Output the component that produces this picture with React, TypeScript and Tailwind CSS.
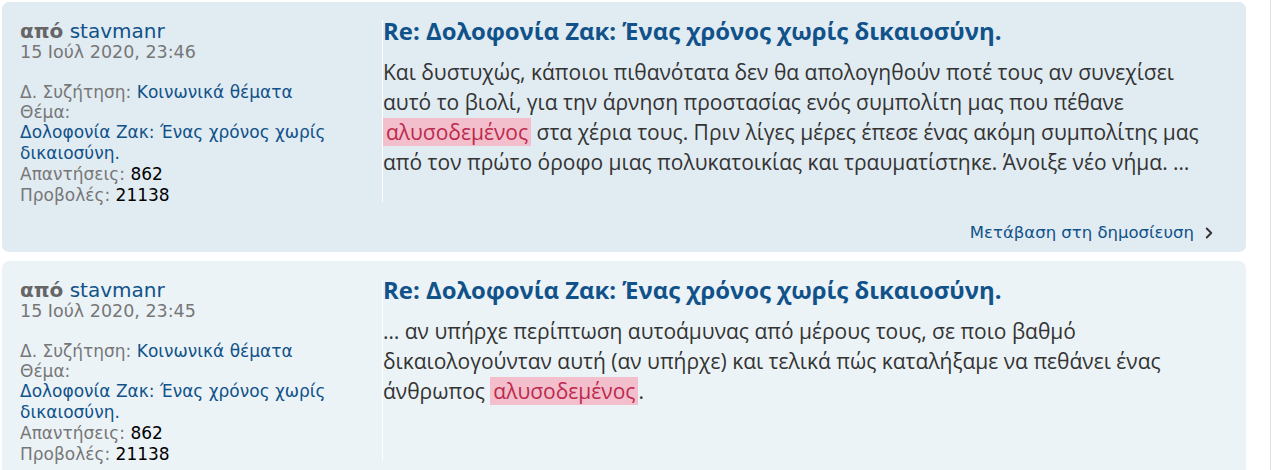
import { ChevronRight } from "lucide-react"

type Post = {
  date: string
  lines: React.ReactNode[]
  bg: string
  link: boolean
}

const hl = (w: string) => (
  <span className="bg-[#f3bfcc] text-[#bc2a4d] px-[3px]">{w}</span>
)

const posts: Post[] = [
  {
    date: "15 Ιούλ 2020, 23:46",
    bg: "bg-[#e1ebf2]",
    link: true,
    lines: [
      "Και δυστυχώς, κάποιοι πιθανότατα δεν θα απολογηθούν ποτέ τους αν συνεχίσει",
      "αυτό το βιολί, για την άρνηση προστασίας ενός συμπολίτη μας που πέθανε",
      <>{hl("αλυσοδεμένος")} στα χέρια τους. Πριν λίγες μέρες έπεσε ένας ακόμη συμπολίτης μας</>,
      "από τον πρώτο όροφο μιας πολυκατοικίας και τραυματίστηκε. Άνοιξε νέο νήμα. …",
    ],
  },
  {
    date: "15 Ιούλ 2020, 23:45",
    bg: "bg-[#ecf3f7]",
    link: false,
    lines: [
      "… αν υπήρχε περίπτωση αυτοάμυνας από μέρους τους, σε ποιο βαθμό",
      "δικαιολογούνταν αυτή (αν υπήρχε) και τελικά πώς καταλήξαμε να πεθάνει ένας",
      <>άνθρωπος {hl("αλυσοδεμένος")}.</>,
    ],
  },
]

function PostRow({ post }: { post: Post }) {
  return (
    <div className={`${post.bg} shrink-0 rounded-[7px] h-[250px] pl-[18px] pr-[31px] pt-[18px] flex flex-col`}>
      <div className="flex">
        <div className="w-[362px] font-['DejaVu_Sans',sans-serif] text-[17px] leading-[20px] text-[#777]">
          <div className="text-[20px] leading-[22px]">
            <span className="font-bold text-[#666]">από</span>{" "}
            <span className="text-[#105289]">stavmanr</span>
          </div>
          <div className="text-[17.5px] text-[#777] mb-[20px]">{post.date}</div>
          <div>
            Δ. Συζήτηση: <span className="text-[#105289]">Κοινωνικά θέματα</span>
          </div>
          <div>Θέμα:</div>
          <div className="text-[#105289] leading-[21px]">Δολοφονία Ζακ: Ένας χρόνος χωρίς δικαιοσύνη.</div>
          <div className="leading-[21px]">
            Απαντήσεις: <span className="text-black">862</span>
          </div>
          <div className="leading-[21px]">
            Προβολές: <span className="text-black">21138</span>
          </div>
        </div>
        <div className="flex-1 h-[182px] border-l border-white font-['Open_Sans',sans-serif]">
          <div className="text-[23.9px] leading-[22px] font-bold text-[#105289]">
            Re: Δολοφονία Ζακ: Ένας χρόνος χωρίς δικαιοσύνη.
          </div>
          <div className="mt-[15px] text-[21px] leading-[30px] text-[#333] whitespace-nowrap">
            {post.lines.map((l, i) => (
              <div key={i}>{l}</div>
            ))}
          </div>
        </div>
      </div>
      {post.link && (
        <div className="flex justify-end items-center mt-[15px] font-['DejaVu_Sans',sans-serif] text-[16.5px] text-[#105289]">
          Μετάβαση στη δημοσίευση
          <ChevronRight className="w-[18px] h-[18px] ml-[6px] -mr-[3px] text-[#333]" strokeWidth={2.5} />
        </div>
      )}
    </div>
  )
}

export default function App() {
  return (
    <div className="bg-white h-[470px] overflow-hidden flex">
      <div className="w-[1246px] pl-[2px] pt-[2px] flex flex-col gap-[9px]">
        {posts.map((p, i) => (
          <PostRow key={i} post={p} />
        ))}
      </div>
      <div className="w-[24px]" />
      <div className="w-px bg-[#e3e3e3]" />
    </div>
  )
}
